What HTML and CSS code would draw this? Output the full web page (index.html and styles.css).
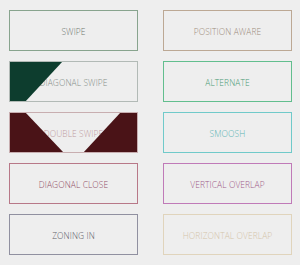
FILE: index.html
```html
<!DOCTYPE html>
<html>
<head>
<meta charset="utf-8">
<link rel="stylesheet" href="styles.css">
</head>
<body>
<div class="grid">
  <div class="btn swipe">SWIPE</div>
  <div class="btn position">POSITION AWARE</div>
  <div class="btn diagonal"><span>DIAGONAL SWIPE</span></div>
  <div class="btn alternate">ALTERNATE</div>
  <div class="btn double"><span>DOUBLE SWIPE</span></div>
  <div class="btn smoosh">SMOOSH</div>
  <div class="btn dclose">DIAGONAL CLOSE</div>
  <div class="btn voverlap">VERTICAL OVERLAP</div>
  <div class="btn zoning">ZONING IN</div>
  <div class="btn hoverlap">HORIZONTAL OVERLAP</div>
</div>
</body>
</html>
```
FILE: styles.css
```css
html, body {
  margin: 0;
  padding: 0;
  background: #eeeeee;
}
.grid {
  display: grid;
  grid-template-columns: 129px 129px;
  grid-auto-rows: 41px;
  column-gap: 25px;
  row-gap: 10px;
  padding: 10px 0 0 9px;
}
.btn {
  position: relative;
  box-sizing: border-box;
  border: 1px solid #999;
  display: flex;
  align-items: center;
  justify-content: center;
  font-family: "Open Sans", sans-serif;
  font-weight: 300;
  font-size: 8.4px;
  letter-spacing: 0.1px;
  overflow: hidden;
  padding-top: 2px;
}
.swipe { border-color: #88a48e; color: #6f7771; }
.position { border-color: #bca894; color: #9c8c7c; }
.diagonal { border-color: #b2bab6; color: #868e8a; }
.alternate { border-color: #62be8e; color: #4a9a74; }
.double { border-color: #c8aeb0; color: #c09ca2; }
.smoosh { border-color: #70caca; color: #5cb4b4; }
.dclose { border-color: #b87888; color: #925068; }
.voverlap { border-color: #c07ab8; color: #a05a88; }
.zoning { border-color: #9090a0; color: #606068; }
.hoverlap { border-color: #e0d4bc; color: #d4c4aa; }

.diagonal::after {
  content: "";
  position: absolute;
  inset: -1px;
  background: #0d3d2e;
  clip-path: polygon(0 0, 54px 0, 16px 100%, 0 100%);
}
.double::before,
.double::after {
  content: "";
  position: absolute;
  inset: -1px;
  background: #4a1317;
}
.double::before {
  clip-path: polygon(0 0, 16px 0, 55px 100%, 0 100%);
}
.double::after {
  clip-path: polygon(112px 0, 100% 0, 100% 100%, 74px 100%);
}
```
